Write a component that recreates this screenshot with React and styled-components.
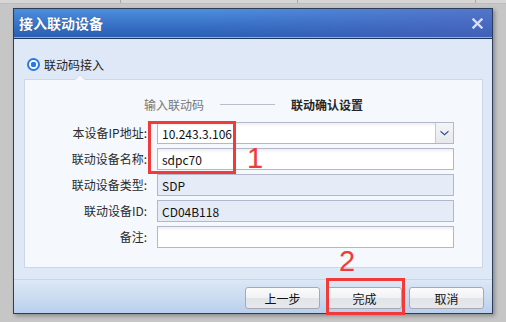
import React from 'react';
import styled, { createGlobalStyle } from 'styled-components';

const Global = createGlobalStyle`
	html, body {
		margin: 0;
		padding: 0;
		background: #c6c6c6;
	}
	body {
		font-family: "Noto Sans CJK SC", "Noto Sans", sans-serif;
		font-size: 12px;
		color: #222;
	}
`

const Page = styled.div`
	position: relative;
	width: 506px;
	height: 322px;
	overflow: hidden;
	background: #c6c6c6;
`

const HeaderStrip = styled.div`
	display: flex;
	height: 3px;
	background: #d6d6d6;
	border-bottom: 1px solid #bdbdbd;
`

const HeaderCell = styled.div`
	width: ${props => props.w}px;
	border-right: 1px solid #a8a8a8;
`

const Dialog = styled.div`
	margin: 4px 0 0 13px;
	width: 478px;
	height: 304px;
	border: 1px solid #2c3c5c;
	display: flex;
	flex-direction: column;
	background: #dfe8f6;
	box-shadow: 2px 2px 4px rgba(0, 0, 0, 0.3);
`

const TitleBar = styled.div`
	height: 28px;
	display: flex;
	align-items: center;
	justify-content: space-between;
	padding: 0 9px 0 5px;
	background:
		linear-gradient(90deg, rgba(80, 100, 190, 0) 40%, rgba(86, 96, 186, 0.55) 100%),
		linear-gradient(180deg, #4d8fdc 0%, #3872c8 55%, #2a5fb2 100%);
	border-bottom: 1px solid #8fb0e0;
	box-shadow: 0 1px 0 #1c3660;
	margin-bottom: 1px;
`

const Title = styled.span`
	color: #fff;
	font-size: 14px;
	font-weight: bold;
	text-shadow: 0 0 1px rgba(0, 0, 40, 0.4);
`

const Close = styled.span`
	display: flex;
	width: 11px;
	height: 11px;
`

const Body = styled.div`
	flex: 1;
	display: flex;
	flex-direction: column;
	padding: 17px 9px 11px 10px;
`

const RadioRow = styled.label`
	display: flex;
	align-items: center;
	gap: 4px;
	height: 16px;
	padding-left: 3px;
	color: #1e1e1e;
`

const RadioDot = styled.span`
	width: 9px;
	height: 9px;
	border-radius: 50%;
	border: 2px solid #2a7ae6;
	background: radial-gradient(circle, #2a7ae6 0 2.6px, #fff 3px);
`

const Panel = styled.div`
	position: relative;
	margin-top: 7px;
	flex: 1;
	background: #f5f8fc;
	border: 1px solid #cdd7e6;
	padding-top: 15px;
	&::before, &::after {
		content: '';
		position: absolute;
		left: 50px;
		width: 0;
		height: 0;
		border-left: 5px solid transparent;
		border-right: 5px solid transparent;
	}
	&::before {
		top: -6px;
		border-bottom: 5px solid #cdd7e6;
	}
	&::after {
		top: -5px;
		border-bottom: 5px solid #f5f8fc;
	}
`

const Steps = styled.div`
	display: flex;
	align-items: center;
	justify-content: center;
	gap: 16px;
	height: 18px;
`

const Step = styled.span`
	font-size: 12px;
	color: ${props => props.active ? '#262626' : '#777'};
	font-weight: ${props => props.active ? 'bold' : 'normal'};
`

const StepLine = styled.span`
	width: 55px;
	height: 1px;
	background: #b8bfcc;
`

const Form = styled.div`
	margin-top: 9px;
	display: grid;
	grid-template-columns: 125px 297px;
	column-gap: 7px;
	row-gap: 4px;
`

const Label = styled.span`
	text-align: right;
	padding-right: 3px;
	line-height: 22px;
	color: #2a2a2a;
`

const Field = styled.div`
	height: 20px;
	display: flex;
	align-items: center;
	border: 1px solid #b3b7ca;
	background: ${props => props.readOnly ? '#e5ecf8' : '#fff'};
	box-shadow: ${props => props.readOnly ? 'none' : 'inset 0 3px 3px -1px rgba(0,0,0,0.07)'};
	padding-left: 4px;
	color: #111;
`

const FieldText = styled.span`
	flex: 1;
`

const DropButton = styled.span`
	width: 17px;
	height: 20px;
	display: flex;
	align-items: center;
	justify-content: center;
	border-left: 1px solid #c4c8d4;
	background: linear-gradient(180deg, #f4f5f8, #e6e8ee);
`

const Footer = styled.div`
	height: 33px;
	display: flex;
	align-items: center;
	justify-content: flex-end;
	gap: 7px;
	padding: 0 8px 0 0;
	border-top: 1px solid #c9d4e6;
	background: linear-gradient(180deg, #dde7f5 0%, #c9daf0 60%, #b9cfee 100%);
`

const Button = styled.button`
	width: 75px;
	height: 22px;
	margin-top: 3px;
	border: 1px solid #a6a9b4;
	border-radius: 3px;
	font-family: inherit;
	font-size: 12px;
	color: #111;
	background: linear-gradient(180deg, #fbfbfc 0%, #f1f2f4 50%, #e2e4e8 52%, #e6e8ec 100%);
	padding: 0;
`

const Mark = styled.div`
	position: absolute;
	left: ${props => props.x}px;
	top: ${props => props.y}px;
	width: ${props => props.w}px;
	height: ${props => props.h}px;
	border: 3px solid #f23a3a;
	box-sizing: border-box;
`

const MarkNumber = styled.span`
	position: absolute;
	left: ${props => props.x}px;
	top: ${props => props.y}px;
	font-family: "Liberation Sans", Arial, sans-serif;
	font-size: 29px;
	line-height: 1;
	color: #f23a3a;
`

const rows = [
	{ label: '本设备IP地址:', value: '10.243.3.106', select: true },
	{ label: '联动设备名称:', value: 'sdpc70' },
	{ label: '联动设备类型:', value: 'SDP', readOnly: true },
	{ label: '联动设备ID:', value: 'CD04B118', readOnly: true },
	{ label: '备注:', value: '' },
];

const App = () => {
	return (
		<Page>
			<Global />
			<HeaderStrip>
				<HeaderCell w={120} />
				<HeaderCell w={176} />
				<HeaderCell w={177} />
			</HeaderStrip>
			<Dialog>
				<TitleBar>
					<Title>接入联动设备</Title>
					<Close>
						<svg width="11" height="11" viewBox="0 0 11 11">
							<path d="M1.5 1.5 L9.5 9.5 M9.5 1.5 L1.5 9.5" stroke="#d9def2" strokeWidth="2.4" strokeLinecap="square" />
						</svg>
					</Close>
				</TitleBar>
				<Body>
					<RadioRow>
						<RadioDot />
						联动码接入
					</RadioRow>
					<Panel>
						<Steps>
							<Step>输入联动码</Step>
							<StepLine />
							<Step active>联动确认设置</Step>
						</Steps>
						<Form>
							{rows.map(row => (
								<React.Fragment key={row.label}>
									<Label>{row.label}</Label>
									<Field readOnly={row.readOnly}>
										<FieldText>{row.value}</FieldText>
										{row.select && (
											<DropButton>
												<svg width="9" height="6" viewBox="0 0 9 6">
													<path d="M0.5 0.5 L4.5 4 L8.5 0.5 L8.5 2 L4.5 5.5 L0.5 2 Z" fill="#2b4886" />
												</svg>
											</DropButton>
										)}
									</Field>
								</React.Fragment>
							))}
						</Form>
					</Panel>
				</Body>
				<Footer>
					<Button>上一步</Button>
					<Button>完成</Button>
					<Button>取消</Button>
				</Footer>
			</Dialog>
			<Mark x={148} y={121} w={88} h={53} />
			<MarkNumber x={247} y={144}>1</MarkNumber>
			<MarkNumber x={339} y={247}>2</MarkNumber>
			<Mark x={326} y={278} w={79} h={37} />
		</Page>
	);
}

export default App;
